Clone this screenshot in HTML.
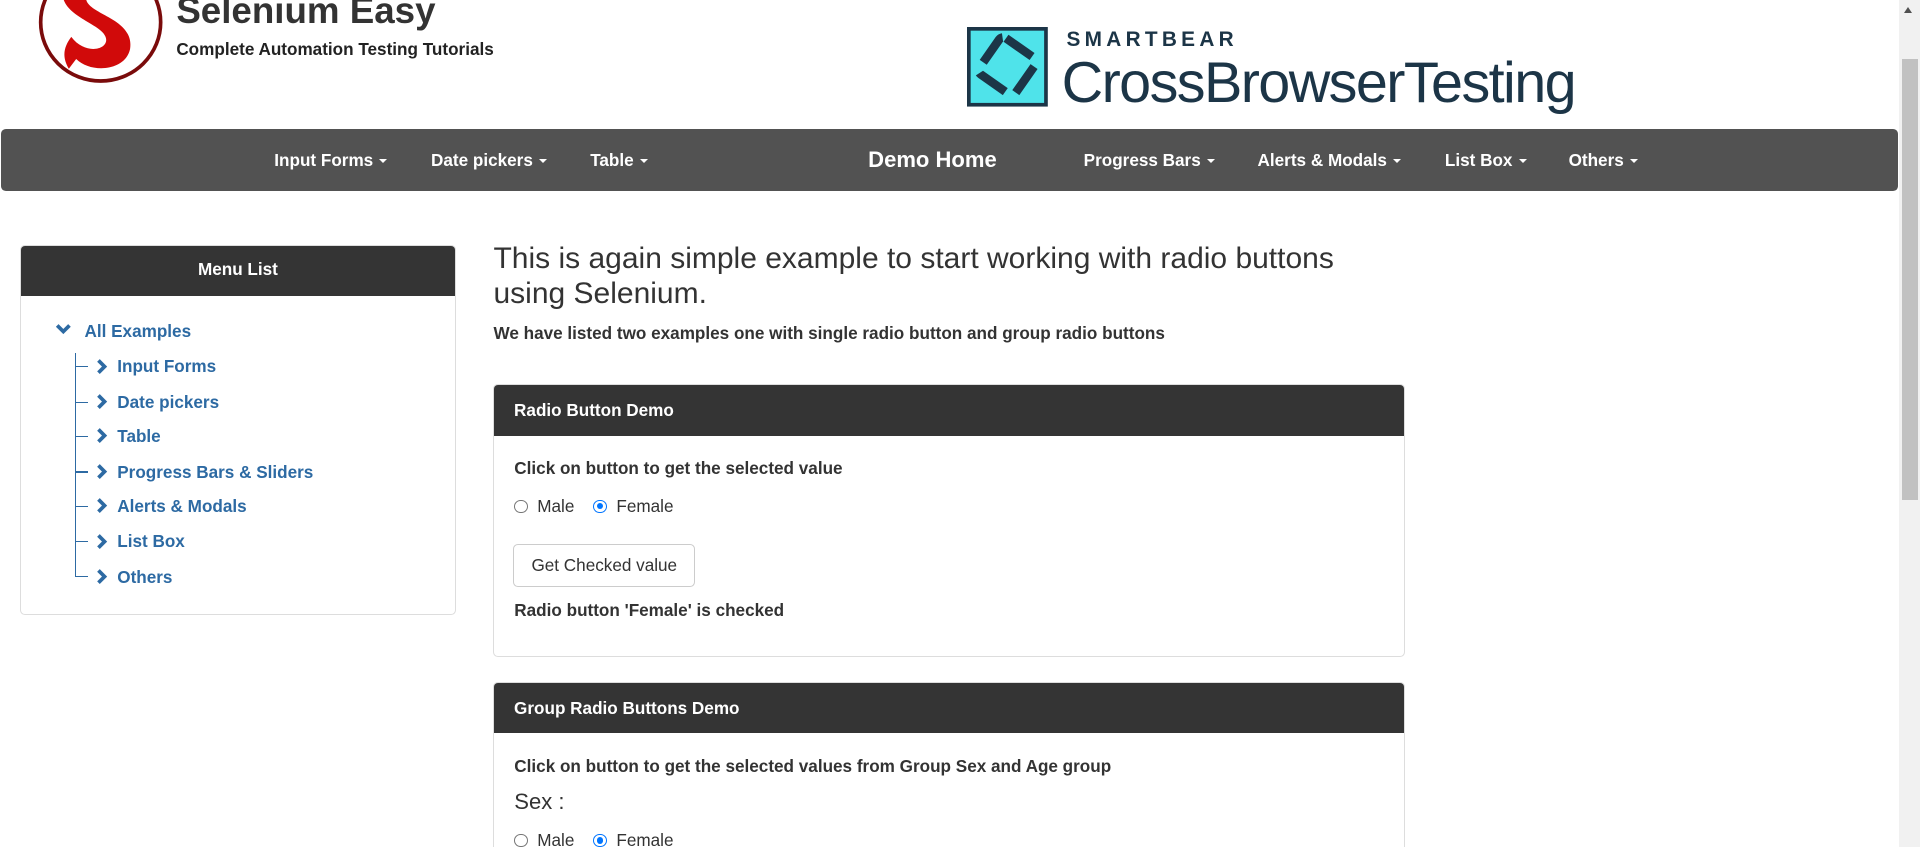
<!DOCTYPE html>
<html><head><meta charset="utf-8"><style>
html,body{margin:0;padding:0;background:#fff;overflow:hidden}
body{width:1568px;height:692px;zoom:1.22449;position:relative;font-family:"Liberation Sans",Arial,sans-serif;color:#333}
.a{position:absolute;white-space:nowrap}
.nav{position:absolute;left:1px;top:105px;width:1549px;height:51px;background:#525252;border-radius:4px}
.ni{position:absolute;top:0;line-height:51px;color:#fff;font-weight:bold;font-size:14px}
.car{display:inline-block;width:0;height:0;border-left:4px solid transparent;border-right:4px solid transparent;border-top:4px solid #fff;vertical-align:middle;margin-left:5px}
.panel{position:absolute;border:1px solid #ddd;border-radius:4px;background:#fff;overflow:hidden}
.ph{background:#343434;color:#fff;font-weight:bold;font-size:14px;height:41px;line-height:41px}
.b{font-weight:bold;font-size:14px}
.radio{display:inline-block;width:11px;height:11px;border:1px solid #767676;border-radius:50%;vertical-align:-1px;box-sizing:border-box;position:relative}
.radio.on{border:1px solid #0075ff}
.radio.on:after{content:"";position:absolute;left:2px;top:2px;width:5px;height:5px;border-radius:50%;background:#0075ff}
.lbl{font-size:14px}
</style></head><body>
<svg class="a" style="left:30px;top:-32px" width="106" height="100" viewBox="0 0 106 100">
<ellipse cx="52" cy="50" rx="49" ry="48" fill="#fff" stroke="#7a0b0b" stroke-width="3"/>
<path d="M22 20 C30 0 70 -2 82 22 L66 30 C56 14 40 16 40 30 C40 44 80 46 76 72 C72 90 44 92 32 80 L26 88 C20 78 22 70 28 62 C40 78 60 72 56 62 C52 50 14 44 22 20 Z" fill="#d10a0a"/>
</svg>
<div class="a" style="left:144px;top:-8px;font-size:30px;font-weight:bold;color:#333">Selenium Easy</div>
<div class="a" style="left:144px;top:32px;font-size:14px;font-weight:bold;color:#222">Complete Automation Testing Tutorials</div>
<svg class="a" style="left:790px;top:22px" width="66" height="65" viewBox="0 0 66 65">
<rect x="1.5" y="1.5" width="63" height="62" fill="#4fe3ea" stroke="#1c3547" stroke-width="3"/>
<g transform="rotate(35 33 32)"><rect x="15" y="14" width="36" height="36" rx="4" fill="none" stroke="#1c3547" stroke-width="7" stroke-dasharray="26 10"/></g>
</svg>
<div class="a" style="left:871px;top:23px;font-size:17px;letter-spacing:3.5px;color:#1c3547;font-weight:bold">SMARTBEAR</div>
<div class="a" style="left:867px;top:41px;font-size:47px;color:#1c3547;letter-spacing:-1.3px">CrossBrowserTesting</div>
<div class="nav">
<div class="ni" style="left:223px">Input Forms<span class="car"></span></div>
<div class="ni" style="left:351px">Date pickers<span class="car"></span></div>
<div class="ni" style="left:481px">Table<span class="car"></span></div>
<div class="ni" style="left:708px;font-size:18px">Demo Home</div>
<div class="ni" style="left:884px">Progress Bars<span class="car"></span></div>
<div class="ni" style="left:1026px">Alerts &amp; Modals<span class="car"></span></div>
<div class="ni" style="left:1179px">List Box<span class="car"></span></div>
<div class="ni" style="left:1280px">Others<span class="car"></span></div>
</div>
<div class="a" style="left:1551px;top:0;width:17px;height:692px;background:#f1f1f1"></div>
<div class="a" style="left:1553px;top:48px;width:13px;height:360px;background:#c1c1c1"></div>
<div class="a" style="left:1555px;top:6px;width:0;height:0;border-left:4px solid transparent;border-right:4px solid transparent;border-bottom:5px solid #505050"></div>
<div class="panel" style="left:16px;top:200px;width:355px;height:301px">
<div class="ph" style="text-align:center;line-height:39px">Menu List</div>
</div>
<svg class="a" style="left:46px;top:264px" width="12" height="10"><path d="M1 2 L6 7 L11 2" fill="none" stroke="#2d6aa3" stroke-width="3"/></svg>
<div class="a" style="left:69px;top:262px;font-size:14px;font-weight:bold;color:#2d6aa3">All Examples</div>
<div class="a" style="left:61px;top:288px;width:1px;height:183px;background:#2d6aa3"></div>
<div class="a" style="left:61px;top:299px;width:11px;height:1px;background:#2d6aa3"></div>
<div class="a" style="left:61px;top:328px;width:11px;height:1px;background:#2d6aa3"></div>
<div class="a" style="left:61px;top:356px;width:11px;height:1px;background:#2d6aa3"></div>
<div class="a" style="left:61px;top:385px;width:11px;height:1px;background:#2d6aa3"></div>
<div class="a" style="left:61px;top:413px;width:11px;height:1px;background:#2d6aa3"></div>
<div class="a" style="left:61px;top:442px;width:11px;height:1px;background:#2d6aa3"></div>
<div class="a" style="left:61px;top:470px;width:11px;height:1px;background:#2d6aa3"></div>
<div class="a" style="left:78px;top:291px;font-size:14px;font-weight:bold;color:#2d6aa3"><svg width="10" height="14" style="vertical-align:-2px"><path d="M2 2 L7 7 L2 12" fill="none" stroke="#2d6aa3" stroke-width="3"/></svg>&nbsp;&nbsp;Input Forms</div>
<div class="a" style="left:78px;top:320px;font-size:14px;font-weight:bold;color:#2d6aa3"><svg width="10" height="14" style="vertical-align:-2px"><path d="M2 2 L7 7 L2 12" fill="none" stroke="#2d6aa3" stroke-width="3"/></svg>&nbsp;&nbsp;Date pickers</div>
<div class="a" style="left:78px;top:348px;font-size:14px;font-weight:bold;color:#2d6aa3"><svg width="10" height="14" style="vertical-align:-2px"><path d="M2 2 L7 7 L2 12" fill="none" stroke="#2d6aa3" stroke-width="3"/></svg>&nbsp;&nbsp;Table</div>
<div class="a" style="left:78px;top:377px;font-size:14px;font-weight:bold;color:#2d6aa3"><svg width="10" height="14" style="vertical-align:-2px"><path d="M2 2 L7 7 L2 12" fill="none" stroke="#2d6aa3" stroke-width="3"/></svg>&nbsp;&nbsp;Progress Bars &amp; Sliders</div>
<div class="a" style="left:78px;top:405px;font-size:14px;font-weight:bold;color:#2d6aa3"><svg width="10" height="14" style="vertical-align:-2px"><path d="M2 2 L7 7 L2 12" fill="none" stroke="#2d6aa3" stroke-width="3"/></svg>&nbsp;&nbsp;Alerts &amp; Modals</div>
<div class="a" style="left:78px;top:434px;font-size:14px;font-weight:bold;color:#2d6aa3"><svg width="10" height="14" style="vertical-align:-2px"><path d="M2 2 L7 7 L2 12" fill="none" stroke="#2d6aa3" stroke-width="3"/></svg>&nbsp;&nbsp;List Box</div>
<div class="a" style="left:78px;top:463px;font-size:14px;font-weight:bold;color:#2d6aa3"><svg width="10" height="14" style="vertical-align:-2px"><path d="M2 2 L7 7 L2 12" fill="none" stroke="#2d6aa3" stroke-width="3"/></svg>&nbsp;&nbsp;Others</div>
<div class="a" style="left:403px;top:198px;font-size:24.5px;line-height:28px;color:#333">This is again simple example to start working with radio buttons<br>using Selenium.</div>
<div class="a b" style="left:403px;top:264px;font-size:14px">We have listed two examples one with single radio button and group radio buttons</div>
<div class="panel" style="left:403px;top:314px;width:743px;height:221px">
<div class="ph" style="padding-left:16px">Radio Button Demo</div>
</div>
<div class="a b" style="left:420px;top:374px">Click on button to get the selected value</div>
<div class="a lbl" style="left:420px;top:405px"><span class="radio"></span>&nbsp;&nbsp;Male&nbsp;&nbsp;&nbsp;&nbsp;<span class="radio on"></span>&nbsp;&nbsp;Female</div>
<div class="a" style="left:419px;top:444px;width:149px;height:35px;border:1px solid #ccc;border-radius:4px;box-sizing:border-box;font-size:14px;line-height:33px;text-align:center;color:#333">Get Checked value</div>
<div class="a b" style="left:420px;top:490px">Radio button 'Female' is checked</div>
<div class="panel" style="left:403px;top:557px;width:743px;height:160px">
<div class="ph" style="padding-left:16px">Group Radio Buttons Demo</div>
</div>
<div class="a b" style="left:420px;top:617px">Click on button to get the selected values from Group Sex and Age group</div>
<div class="a" style="left:420px;top:644px;font-size:18px">Sex :</div>
<div class="a lbl" style="left:420px;top:678px"><span class="radio"></span>&nbsp;&nbsp;Male&nbsp;&nbsp;&nbsp;&nbsp;<span class="radio on"></span>&nbsp;&nbsp;Female</div>
</body></html>
